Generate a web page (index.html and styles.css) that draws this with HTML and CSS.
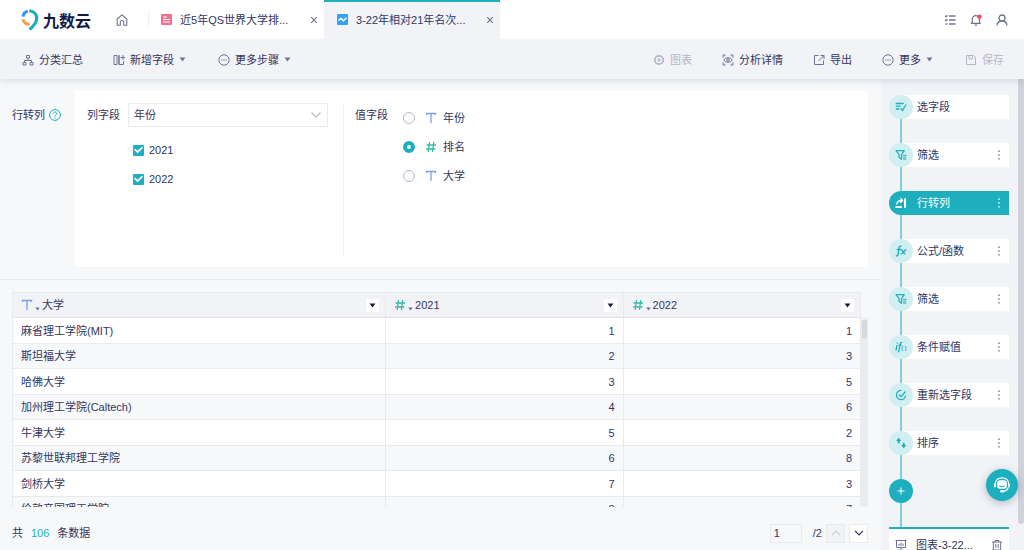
FILE: index.html
```html
<!DOCTYPE html>
<html lang="zh-CN">
<head>
<meta charset="utf-8">
<title>九数云</title>
<link rel="stylesheet" href="styles.css">
</head>
<body>
<svg class="defs" aria-hidden="true">
  <symbol id="type-text" viewBox="0 0 12 12"><path d="M1.5 3V1.5h9V3M6 1.5v9.5" fill="none" stroke="#7ba2e3" stroke-width="1.3"/></symbol>
  <symbol id="type-number" viewBox="0 0 12 12"><path d="M4.6 1 3.2 11M8.8 1 7.4 11M1.6 4h9.4M1 8h9.4" fill="none" stroke="#3bb8a5" stroke-width="1.3"/></symbol>
  <symbol id="caret" viewBox="0 0 8 6"><path d="M0.5 0.5h7L4 5.5z" fill="currentColor"/></symbol>
  <symbol id="close" viewBox="0 0 8 8"><path d="M1.2 1.2l5.6 5.6M6.8 1.2 1.2 6.8" fill="none" stroke="currentColor" stroke-width="1.1"/></symbol>
  <symbol id="dots" viewBox="0 0 4 12"><path d="M1.3 1.5h1.4v1.4H1.3zM1.3 5.3h1.4v1.4H1.3zM1.3 9.1h1.4v1.4H1.3z" fill="currentColor"/></symbol>
  <symbol id="ellipsis-circle" viewBox="0 0 12 12"><circle cx="6" cy="6" r="5.2" fill="none" stroke="currentColor"/><path d="M3 5.5h1.4v1H3zM5.3 5.5h1.4v1H5.3zM7.6 5.5H9v1H7.6z" fill="currentColor"/></symbol>
  <symbol id="filter" viewBox="0 0 12 12"><path d="M1 1.7h8.4L6.5 5.4v4.9L4 8.3V5.4z" fill="none" stroke="currentColor" stroke-width="1.2" stroke-linejoin="round"/><path d="M8 6.3h3.3M8 8.2h3.3M8 10.1h3.3" stroke="currentColor" stroke-width="1"/></symbol>
</svg>

<div class="app">
  <header class="header">
    <div class="brand">
      <svg class="brand-mark" viewBox="0 0 18 22" aria-hidden="true" fill="none" stroke-width="3.2">
        <path d="M2 7.7A6.2 6.2 0 0 1 6.8 2.2" stroke="#3499f2"/>
        <path d="M8.2 2A7 7 0 0 1 15.7 9c0 5-2.8 8-7.2 11.4" stroke="#1eafbe"/>
        <path d="M2 10.2a6 6 0 0 0 6.7 5" stroke="#f6a044"/>
      </svg>
      <span class="brand-name">九数云</span>
    </div>
    <button class="icon-button home" aria-label="首页">
      <svg class="icon" viewBox="0 0 12 12" fill="none" stroke="currentColor" stroke-width="1.1"><path d="M1.2 5 6 .8 10.800 5v6.200H7.700V8.200a1.700 1.700 0 0 0-3.400 0v3H1.200z" stroke-linejoin="round"/></svg>
    </button>
    <nav class="tabs">
      <div class="tab">
        <svg class="tab-icon" viewBox="0 0 11 11" aria-hidden="true"><rect width="11" height="11" rx="1" fill="#f2708f"/><path d="M2 3h4M2 5.5h7M2 8h7" stroke="#fff"/></svg>
        <a class="tab-link" href="#">近5年QS世界大学排...</a>
        <button class="icon-button" aria-label="关闭"><svg class="close"><use href="#close"/></svg></button>
      </div>
      <div class="tab tab-active">
        <svg class="tab-icon" viewBox="0 0 11 11" aria-hidden="true"><rect width="11" height="11" rx="1" fill="#36a0f7"/><path d="M1.5 6.6 4 4.2l2.5 2.6 3-3" stroke="#fff" stroke-width="1.4" fill="none"/></svg>
        <a class="tab-link" href="#">3-22年相对21年名次...</a>
        <button class="icon-button" aria-label="关闭"><svg class="close"><use href="#close"/></svg></button>
      </div>
    </nav>
    <div class="account">
      <button class="icon-button" aria-label="任务"><svg class="icon" viewBox="0 0 12 12" fill="none" stroke="currentColor" stroke-width="1.3"><path d="M5 2h6.500M5 6h6.500M5 10h6.500M1 2l1 .7 1.500-1.500M1 6l1 .7 1.500-1.500M1.500 10h1.800"/></svg></button>
      <button class="icon-button" aria-label="通知"><svg class="icon" viewBox="0 0 12 12" fill="none" stroke="currentColor" stroke-width="1.2"><path d="M.8 9.4h10M2.200 9.4V5.200a3.600 3.600 0 0 1 7.200 0v4.200M4.600 11.200h2.400"/><circle cx="9.4" cy="2.6" r="2.2" fill="#f5474c" stroke="none"/></svg></button>
      <button class="icon-button" aria-label="用户"><svg class="icon" viewBox="0 0 12 12" fill="none" stroke="currentColor" stroke-width="1.3"><circle cx="6" cy="4" r="3"/><path d="M1 11.400C1.200 8.600 3.200 7 6 7s4.800 1.600 5 4.400"/></svg></button>
    </div>
  </header>

  <div class="toolbar">
    <button class="tool"><svg class="icon" viewBox="0 0 12 12" fill="none" stroke="currentColor"><path d="M4.500 1.500h3v2.500h-3zM6 4v2.500M2.500 8.500v-2h7v2M1 8.500h3V11H1zM8 8.500h3V11H8z"/></svg>分类汇总</button>
    <button class="tool"><svg class="icon" viewBox="0 0 12 12" fill="none" stroke="currentColor"><path d="M1 1.500h3v9H1zM6 1v9.500h4.500V7M6 1.500v9M10 1v5M7.500 3.500h4.500"/></svg>新增字段<svg class="caret"><use href="#caret"/></svg></button>
    <button class="tool"><svg class="icon"><use href="#ellipsis-circle"/></svg>更多步骤<svg class="caret"><use href="#caret"/></svg></button>
    <span class="spacer"></span>
    <button class="tool" disabled><svg class="icon" viewBox="0 0 12 12"><circle cx="6" cy="6" r="4.200" fill="none" stroke="currentColor" stroke-width="1.800"/><path d="M6 4v4M4 6h4" stroke="currentColor" stroke-width="1.200"/></svg>图表</button>
    <button class="tool"><svg class="icon" viewBox="0 0 12 12" fill="none" stroke="currentColor"><path d="M1 3.500V1h2.500M8.500 1H11v2.500M11 8.500V11H8.500M3.500 11H1V8.500M1.800 6C3.500 3 8.500 3 10.200 6 8.500 9 3.500 9 1.800 6z"/><circle cx="6" cy="6" r="1.300"/></svg>分析详情</button>
    <button class="tool"><svg class="icon" viewBox="0 0 12 12" fill="none" stroke="currentColor"><path d="M5.500 1.500h-4v9h9v-4M7.500 1.500h3.500V5M11 1.500 5.500 7"/></svg>导出</button>
    <button class="tool"><svg class="icon"><use href="#ellipsis-circle"/></svg>更多<svg class="caret"><use href="#caret"/></svg></button>
    <button class="tool" disabled><svg class="icon" viewBox="0 0 12 12" fill="none" stroke="currentColor"><path d="M1.500 1.500h7l2 2v7h-9zM4 1.500v3.500h3.500V1.500"/></svg>保存</button>
  </div>

  <div class="body">
    <main class="main">
      <section class="config">
        <h2 class="config-title">行转列
          <svg class="icon help" viewBox="0 0 12 12" fill="none" stroke="currentColor"><circle cx="6" cy="6" r="5.400"/><path d="M4.300 4.800C4.300 2.500 7.700 2.500 7.700 4.700 7.700 6 6 5.900 6 7.500M6 8.400v1.100"/></svg>
        </h2>
        <div class="card">
          <div class="column-field">
            <label class="field-label" for="column">列字段</label>
            <div class="field-body">
              <div class="select-box">
                <select id="column" class="select"><option>年份</option></select>
                <svg class="select-arrow" viewBox="0 0 10 6" aria-hidden="true"><path d="M0.500 0.500 5 5 9.500 0.500" fill="none" stroke="currentColor" stroke-width="1.200"/></svg>
              </div>
              <label class="check-row"><input class="checkbox" type="checkbox" checked>2021</label>
              <label class="check-row"><input class="checkbox" type="checkbox" checked>2022</label>
            </div>
          </div>
          <div class="value-field" role="radiogroup" aria-labelledby="value-label">
            <span class="field-label" id="value-label">值字段</span>
            <div class="radio-list">
              <label class="radio-row"><input class="radio" type="radio" name="value"><svg class="icon"><use href="#type-text"/></svg>年份</label>
              <label class="radio-row"><input class="radio" type="radio" name="value" checked><svg class="icon"><use href="#type-number"/></svg>排名</label>
              <label class="radio-row"><input class="radio" type="radio" name="value"><svg class="icon"><use href="#type-text"/></svg>大学</label>
            </div>
          </div>
        </div>
      </section>

      <section class="data">
        <div class="table-view">
          <table class="table">
            <thead>
              <tr>
                <th class="col-name"><div class="head"><svg class="icon"><use href="#type-text"/></svg><svg class="mini"><use href="#caret"/></svg>大学<button class="filter" aria-label="筛选"><svg><use href="#caret"/></svg></button></div></th>
                <th class="col-number"><div class="head"><svg class="icon"><use href="#type-number"/></svg><svg class="mini"><use href="#caret"/></svg>2021<button class="filter" aria-label="筛选"><svg><use href="#caret"/></svg></button></div></th>
                <th class="col-number"><div class="head"><svg class="icon"><use href="#type-number"/></svg><svg class="mini"><use href="#caret"/></svg>2022<button class="filter" aria-label="筛选"><svg><use href="#caret"/></svg></button></div></th>
              </tr>
            </thead>
            <tbody>
              <tr><td>麻省理工学院(MIT)</td><td>1</td><td>1</td></tr>
              <tr><td>斯坦福大学</td><td>2</td><td>3</td></tr>
              <tr><td>哈佛大学</td><td>3</td><td>5</td></tr>
              <tr><td>加州理工学院(Caltech)</td><td>4</td><td>6</td></tr>
              <tr><td>牛津大学</td><td>5</td><td>2</td></tr>
              <tr><td>苏黎世联邦理工学院</td><td>6</td><td>8</td></tr>
              <tr><td>剑桥大学</td><td>7</td><td>3</td></tr>
              <tr><td>伦敦帝国理工学院</td><td>8</td><td>7</td></tr>
            </tbody>
          </table>
          <div class="table-scroll"><div class="table-thumb"></div></div>
        </div>
        <footer class="pager">
          <span>共</span><span class="total">106</span><span>条数据</span>
          <span class="spacer"></span>
          <input class="page-input" type="text" value="1" aria-label="页码">
          <span class="page-count">/2</span>
          <button class="page-button" disabled aria-label="上一页"><svg viewBox="0 0 10 6"><path d="M1 5.200 5 1.200l4 4" fill="none" stroke="currentColor" stroke-width="1.200"/></svg></button>
          <button class="page-button" aria-label="下一页"><svg viewBox="0 0 10 6"><path d="M1 0.800l4 4 4-4" fill="none" stroke="currentColor" stroke-width="1.200"/></svg></button>
        </footer>
      </section>
    </main>

    <aside class="side">
      <div class="flow">
        <ol class="steps">
          <li class="step"><span class="step-icon"><svg class="icon" viewBox="0 0 12 12" fill="none" stroke="currentColor" stroke-width="1.300"><path d="M.8 2.500h8M.8 5.200h5M.8 8h3.500M5.500 7.500 7.500 9.500 11.200 3.500"/></svg></span><button class="step-label">选字段</button></li>
          <li class="step"><span class="step-icon"><svg class="icon"><use href="#filter"/></svg></span><button class="step-label">筛选</button><button class="step-more" aria-label="更多"><svg><use href="#dots"/></svg></button></li>
          <li class="step step-active"><span class="step-icon"><svg class="icon" viewBox="0 0 12 12" fill="none" stroke="currentColor"><path d="M.5 10h6.300M10 1.200v9.500" stroke-width="2"/><path d="M1.800 7.500C1.800 4.500 3.500 3.500 7 3.500M5.300 1.300 7.600 3.500 5.300 5.700" stroke-width="1.300"/></svg></span><button class="step-label">行转列</button><button class="step-more" aria-label="更多"><svg><use href="#dots"/></svg></button></li>
          <li class="step"><span class="step-icon"><svg class="icon" viewBox="0 0 12 12" fill="none" stroke="currentColor" stroke-width="1.400"><path d="M6.500 1.300C4.500.5 4.200 2 3.900 4L3.100 8.800C2.900 10.600 2.300 11.200.8 10.700M1.800 4.500h4.500M6 5c2-.8 2.300 4.700 4.500 3.800M11.300 4.700C9.200 4.500 8 9.300 5.500 8.800"/></svg></span><button class="step-label">公式/函数</button><button class="step-more" aria-label="更多"><svg><use href="#dots"/></svg></button></li>
          <li class="step"><span class="step-icon"><svg class="icon"><use href="#filter"/></svg></span><button class="step-label">筛选</button><button class="step-more" aria-label="更多"><svg><use href="#dots"/></svg></button></li>
          <li class="step"><span class="step-icon"><svg class="icon" viewBox="0 0 12 12" fill="none" stroke="currentColor" stroke-width="1.300"><path d="M2 4 1 9.500M2.300 1.500 2.100 2.700M7.300 1.500C5.500.8 5.300 2.500 5 4L4.200 8.500C4 10.500 3.500 11 2.700 10.900M3.300 4.200h3.400"/><path d="M8 5C6.800 6.500 6.800 8.500 7.700 10M10.200 5C11.400 6.500 11.400 8.500 10.200 10" stroke-width=".9"/></svg></span><button class="step-label">条件赋值</button><button class="step-more" aria-label="更多"><svg><use href="#dots"/></svg></button></li>
          <li class="step"><span class="step-icon"><svg class="icon" viewBox="0 0 12 12" fill="none" stroke="currentColor" stroke-width="1.200"><path d="M6.500 1.500A4.600 4.600 0 1 0 10.600 6.500M3.700 5.500 6 7.700 10.500 2.500"/></svg></span><button class="step-label">重新选字段</button><button class="step-more" aria-label="更多"><svg><use href="#dots"/></svg></button></li>
          <li class="step"><span class="step-icon"><svg class="icon" viewBox="0 0 12 12" fill="currentColor"><path d="M3.700.8 6.300 3.900H4.700v2.300H2.700V3.900H1.100zM8.700 11.200 6.100 8.100h1.600V5.800h2v2.300h1.600z"/></svg></span><button class="step-label">排序</button><button class="step-more" aria-label="更多"><svg><use href="#dots"/></svg></button></li>
        </ol>
        <button class="add-step" aria-label="添加步骤"><svg class="icon" viewBox="0 0 12 12"><path d="M6 2.500v7M2.500 6h7" stroke="currentColor" stroke-width="1"/></svg></button>
      </div>
      <div class="chart-card">
        <svg class="icon" viewBox="0 0 12 12" fill="none" stroke="currentColor"><path d="M.5 1.500h11M1.500 1.500v7h9v-7M6 8.500v2.500M3 11.300h6M4 7V5M6 7V3.500M8 7V4.500"/></svg>
        <a class="chart-name" href="#">图表-3-22...</a>
        <button class="icon-button" aria-label="删除"><svg class="icon" viewBox="0 0 12 12" fill="none" stroke="currentColor"><path d="M1 3h10M4 3V1.500h4V3M2.300 3v8h7.400V3M4.800 5v4M7.200 5v4"/></svg></button>
      </div>
      <div class="page-scroll"></div>
    </aside>
  </div>
  <button class="chat" aria-label="在线客服">
    <svg viewBox="0 0 18 18" fill="none" stroke="currentColor"><path d="M2.300 8C2.300-.3 15.700-.3 15.700 8" stroke-width="1.200"/><rect x="4.200" y="4.200" width="9.600" height="8.600" rx="2.800" fill="currentColor" stroke="none"/><path d="M2 7.500v3.800M16 7.500v3.800" stroke-width="1.800"/><path d="M15.300 11.500c-.8 2.500-2.300 3.500-4.800 3.900" stroke-width="1.100"/><path d="M6.300 9.700c1.300 1.300 4.100 1.300 5.400 0" stroke="#1eafbe" stroke-width="1.100"/><rect x="7.200" y="14" width="4" height="2.400" rx="1.200" fill="currentColor" stroke="none"/></svg>
  </button>
</div>
</body>
</html>
```

FILE: styles.css
```css
:root {
  --teal: #1eafbe;
  --teal-light: #d1eef1;
  --ink: #30365f;
  --muted: #6f7392;
  --faint: #b4b7c5;
  --panel: #f1f3f7;
  --page: #f6f8fa;
  --line: #e8eaee;
}

* { box-sizing: border-box; }

body {
  margin: 0;
  font: 11px/16px "Liberation Sans", "Noto Sans CJK SC", sans-serif;
  color: var(--ink);
  background: var(--page);
}

button, input, select { font: inherit; color: inherit; }
button { padding: 0; border: 0; background: none; }
a { color: inherit; text-decoration: none; }
svg { display: block; flex: none; }

.defs { display: none; }
.icon { width: 12px; height: 12px; }
.spacer { flex: 1; }
.icon-button { display: flex; color: var(--muted); }

.app { display: flex; flex-direction: column; height: 100vh; overflow: hidden; }

/* Header */
.header { position: relative; z-index: 2; display: flex; align-items: stretch; height: 39px; flex: none; padding-right: 16px; background: #fff; }
.brand { display: flex; align-items: center; gap: 4px; padding-left: 21px; }
.brand-mark { width: 18px; height: 22px; }
.brand-name { font: 700 16px/24px "Noto Sans CJK SC", sans-serif; color: #141a48; }
.home { align-items: center; padding: 0 20px 0 25px; }
.tabs { display: flex; }
.tab { display: flex; align-items: center; width: 176px; padding: 0 6px 0 13px; }
.tab:first-child { background: linear-gradient(#eceef2, #eceef2) 0 12px / 1px 15px no-repeat; }
.tab-active { background: var(--panel); box-shadow: inset 0 2px var(--teal); }
.tab-icon { width: 11px; height: 11px; margin-right: 8px; }
.tab-link { flex: 1; white-space: nowrap; }
.close { width: 8px; height: 8px; }
.account { display: flex; align-items: center; gap: 14px; margin-left: auto; }

/* Toolbar */
.toolbar {
  position: relative;
  z-index: 1;
  display: flex;
  align-items: center;
  gap: 30px;
  height: 40px;
  flex: none;
  padding: 1px 20px 0 22px;
  background: var(--panel);
  box-shadow: 0 1px 8px rgba(40, 50, 70, 0.16);
}
.tool { display: flex; align-items: center; gap: 5px; white-space: nowrap; }
.tool .icon { color: var(--muted); }
.tool:disabled, .tool:disabled .icon { color: var(--faint); }
.toolbar .spacer { margin: 0 -30px; }
.caret { width: 7px; height: 5px; margin-right: 2px; color: var(--muted); }

/* Layout */
.body { display: flex; flex: 1; min-height: 0; }
.main { display: flex; flex-direction: column; flex: 1; min-width: 0; }

/* Step settings */
.config { display: flex; padding: 12px 13px 12px 12px; border-bottom: 1px solid var(--line); }
.config-title { display: flex; gap: 4px; width: 63px; flex: none; margin: 0; padding-top: 16px; font: inherit; }
.help { margin-top: 2px; color: var(--teal); }
.card { display: flex; flex: 1; height: 176px; padding: 12px; background: #fff; }
.column-field { display: flex; gap: 8px; padding-right: 15px; border-right: 1px solid #eff1f4; }
.field-label { padding-top: 4px; white-space: nowrap; }
.select-box { position: relative; width: 200px; margin-bottom: 15px; }
.select { width: 100%; height: 24px; padding: 0 5px; border: 1px solid #e8eaee; border-radius: 0; background: #fff; appearance: none; }
.select-arrow { position: absolute; right: 7px; top: 9px; width: 10px; height: 6px; color: var(--faint); pointer-events: none; }
.check-row { display: flex; align-items: center; gap: 5px; height: 16px; margin: 0 0 13px 5px; }
.checkbox { display: grid; place-items: center; width: 11px; height: 11px; margin: 0; border-radius: 1px; background: var(--teal); appearance: none; }
.checkbox::after { content: ""; width: 9px; height: 7px; background: #fff; clip-path: polygon(0 45%, 12% 28%, 40% 62%, 88% 5%, 100% 20%, 40% 95%); }
.value-field { display: flex; gap: 15px; padding-left: 11px; }
.radio-list { display: flex; flex-direction: column; gap: 13px; padding-top: 7px; }
.radio-row { display: flex; align-items: center; height: 16px; }
.radio { width: 12px; height: 12px; margin: 0 10px 0 0; border: 1px solid #b4b8c6; border-radius: 50%; background: #fff; appearance: none; }
.radio:checked { border: 4px solid var(--teal); }
.radio-row .icon { margin-right: 6px; }

/* Data table */
.data { display: flex; flex-direction: column; flex: 1; min-height: 0; padding: 12px 13px 7px 12px; }
.table-view { display: flex; flex: 1; min-height: 0; overflow: hidden; }
.table { flex: 1; height: max-content; border-collapse: separate; border-spacing: 0; table-layout: fixed; border-left: 1px solid var(--line); }
.table th, .table td { padding: 0 8px; border-right: 1px solid var(--line); border-bottom: 1px solid var(--line); font-weight: 400; text-align: right; }
.table td:first-child { text-align: left; }
.table th { height: 26px; padding: 0 6px 0 8px; border-top: 1px solid var(--line); border-bottom-color: #dfe1e7; background: var(--panel); }
.table td { height: 25px; }
.table tbody tr:nth-child(odd) td { height: 26px; background: #fff; }
.col-name { width: 44%; }
.col-number { width: 28%; }
.head { display: flex; align-items: center; }
.mini { width: 5px; height: 4px; margin: 8px 2px 0 2px; color: var(--muted); }
.filter { display: grid; place-items: center; width: 13px; height: 13px; margin-left: auto; background: #fff; color: #141a48; }
.filter svg { width: 7px; height: 5px; }
.table-scroll { width: 7px; margin-top: 26px; padding: 2px 1px; border-radius: 0 0 4px 4px; background: #ebecf0; }
.table-thumb { height: 19px; border-radius: 3px; background: #d7d9de; }

.pager { display: flex; align-items: center; height: 20px; margin-top: 16px; }
.total { margin: 0 8px; color: var(--teal); }
.page-input { width: 32px; height: 19px; padding: 0 3px; border: 1px solid var(--line); background: transparent; }
.page-count { margin: 0 4px 0 11px; }
.page-button { display: grid; place-items: center; width: 19px; height: 19px; border: 1px solid var(--line); background: #fff; }
.page-button + .page-button { margin-left: 4px; }
.page-button:disabled { background: #f2f3f5; color: #c9cbd2; }
.page-button svg { width: 10px; height: 6px; }

/* Step list */
.side { position: relative; width: 143px; flex: none; padding: 16px 15px 0 8px; background: var(--panel); }
.flow { padding-bottom: 24px; background: linear-gradient(#7ed0d9, #7ed0d9) 11px 12px / 2px 100% no-repeat; }
.steps { display: grid; gap: 24px; margin: 0 0 24px; padding: 0; list-style: none; }
.step { display: flex; height: 24px; padding-right: 8px; border-radius: 12px 0 0 12px; background: linear-gradient(#fff, #fff) 12px 0 no-repeat; }
.step-icon { display: grid; place-items: center; width: 24px; height: 24px; margin-right: 4px; border-radius: 50%; background: var(--teal-light); color: var(--teal); }
.step-label { flex: 1; text-align: left; white-space: nowrap; }
.step-more { color: var(--muted); }
.step-more svg { width: 4px; height: 12px; }
.step-active { background: var(--teal); color: #fff; }
.step-active .step-icon, .step-active .step-more { background: none; color: #fff; }
.add-step { display: grid; place-items: center; width: 24px; height: 24px; border-radius: 50%; background: var(--teal); color: #fff; }
.chart-card { display: flex; align-items: center; height: 34px; padding: 0 6px; border-top: 2px solid var(--teal); background: #fff; }
.chart-card .icon { color: var(--muted); }
.chart-name { flex: 1; margin-left: 9px; white-space: nowrap; }
.page-scroll { position: absolute; top: 0; right: 0; width: 6px; height: 445px; border-radius: 0 0 3px 3px; background: #cfd2d9; }

.chat {
  position: fixed;
  right: 6px;
  bottom: 49px;
  z-index: 2;
  display: grid;
  place-items: center;
  width: 32px;
  height: 32px;
  border-radius: 50%;
  background: var(--teal);
  color: #fff;
  box-shadow: 0 2px 8px rgba(30, 50, 80, 0.3);
}
.chat svg { width: 18px; height: 18px; }
```
